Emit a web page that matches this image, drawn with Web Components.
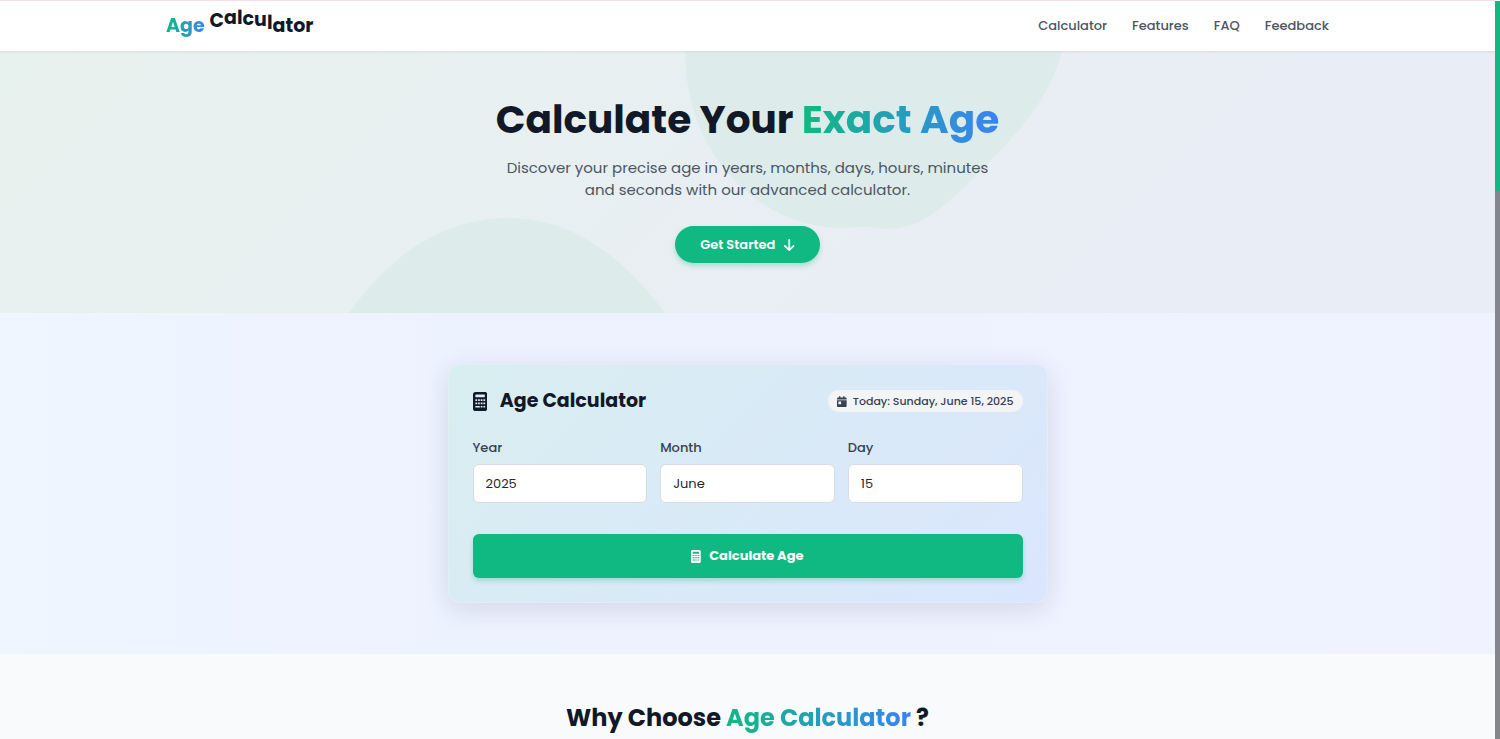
<!DOCTYPE html>
<html lang="en">
<head>
<meta charset="UTF-8">
<meta name="viewport" content="width=device-width, initial-scale=1.0">
<title>Age Calculator</title>
<style>
    :root {
        --primary: #10b981;
        --secondary: #3b82f6;
        --dark: #111827;
        --text: #4b5563;
        --label: #374151;
        --bar: 5px;
    }
    body {
        margin: 0;
        min-height: 100vh;
        display: flex;
        flex-direction: column;
        padding-right: var(--bar);
        box-sizing: border-box;
        background: #f9fafb;
        color: var(--dark);
        font-family: Poppins, Inter, "Open Sans", sans-serif;
        font-size: 13px;
    }
</style>
</head>
<body>
<site-header>
    <wave-logo slot="logo" lead="Age" word="Calculator"></wave-logo>
    <nav-link href="#calculator">Calculator</nav-link>
    <nav-link href="#features">Features</nav-link>
    <nav-link href="#faq">FAQ</nav-link>
    <nav-link href="#feedback">Feedback</nav-link>
</site-header>

<hero-banner>
    <span slot="title">Calculate Your <gradient-text>Exact Age</gradient-text></span>
    <span slot="text">Discover your precise age in years, months, days, hours, minutes and seconds with our advanced calculator.</span>
    <span slot="action">Get Started</span>
</hero-banner>

<age-calculator id="calculator" year="2025" month="6" day="15"></age-calculator>

<feature-section id="features">Why Choose <gradient-text>Age Calculator</gradient-text>?</feature-section>

<scroll-track></scroll-track>

<script>
const MONTHS = ['January', 'February', 'March', 'April', 'May', 'June', 'July',
    'August', 'September', 'October', 'November', 'December'];
const DAYS = ['Sunday', 'Monday', 'Tuesday', 'Wednesday', 'Thursday', 'Friday', 'Saturday'];

const ICONS = {
    calculator: ['0 0 384 512', 'M64 0C28.700 0 0 28.700 0 64V448c0 35.300 28.700 64 64 64H320c35.300 0 64-28.700 64-64V64c0-35.300-28.700-64-64-64H64zM80 64H304c9 0 16 7 16 16v48c0 9-7 16-16 16H80c-9 0-16-7-16-16V80c0-9 7-16 16-16zM64 192h48v48H64zM136 192h48v48h-48zM208 192h48v48h-48zM280 192h48v48h-48zM64 280h48v48H64zM136 280h48v48h-48zM208 280h48v48h-48zM280 280h48v48h-48zM64 376H184v40H64zM208 376h48v40h-48zM280 376h48v40h-48z'],
    calendar: ['0 0 448 512', 'M128 0c17.700 0 32 14.300 32 32v32h128V32c0-17.700 14.300-32 32-32s32 14.300 32 32v32h48c26.500 0 48 21.500 48 48v48H0v-48C0 85.500 21.500 64 48 64h48V32c0-17.700 14.300-32 32-32zM0 192h448v272c0 26.500-21.500 48-48 48H48c-26.500 0-48-21.500-48-48V192zm80 64c-8.800 0-16 7.200-16 16v96c0 8.800 7.200 16 16 16h96c8.800 0 16-7.200 16-16v-96c0-8.800-7.200-16-16-16H80z'],
    down: ['0 0 384 512', 'M169.400 470.600c12.500 12.500 32.800 12.500 45.300 0l160-160c12.500-12.500 12.500-32.800 0-45.300s-32.800-12.500-45.300 0L224 370.800V64c0-17.700-14.300-32-32-32s-32 14.300-32 32v306.700L54.600 265.400c-12.500-12.500-32.800-12.500-45.300 0s-12.500 32.800 0 45.300l160 160z']
};

function icon(name, height) {
    const [box, path] = ICONS[name];
    return `<svg viewBox="${box}" height="${height}" fill="currentColor" fill-rule="evenodd" aria-hidden="true"><path d="${path}"/></svg>`;
}

class GradientText extends HTMLElement {
    constructor() {
        super();
        this.attachShadow({ mode: 'open' });
        this.shadowRoot.innerHTML = `
            <style>
                :host {
                    background: linear-gradient(90deg, var(--primary), var(--secondary));
                    -webkit-background-clip: text;
                    background-clip: text;
                    color: transparent;
                }
            </style>
            <slot></slot>
        `;
    }
}

// letters ride on a wave, frozen at one frame
class WaveLogo extends HTMLElement {
    constructor() {
        super();
        this.attachShadow({ mode: 'open' });
    }

    connectedCallback() {
        const wave = [5, 8, 8, 7, 6, 3, 0, 0, 0, 0];
        const letters = [...this.getAttribute('word')]
            .map((ch, i) => `<span class="ch" style="--lift:${wave[i] || 0}px">${ch}</span>`)
            .join('');
        this.shadowRoot.innerHTML = `
            <style>
                :host {
                    display: flex;
                    gap: 5px;
                    font-size: 19px;
                    line-height: 28px;
                    font-weight: 700;
                    color: var(--dark);
                }
                .ch {
                    display: inline-block;
                    transform: translateY(calc(var(--lift) * -1));
                }
            </style>
            <gradient-text>${this.getAttribute('lead')}</gradient-text>
            <span>${letters}</span>
        `;
    }
}

class NavLink extends HTMLElement {
    constructor() {
        super();
        this.attachShadow({ mode: 'open' });
        this.shadowRoot.innerHTML = `
            <style>
                :host {
                    display: block;
                }
                a {
                    color: var(--text);
                    font-weight: 500;
                    line-height: 20px;
                    text-decoration: none;
                }
                a:hover {
                    color: var(--primary);
                }
            </style>
            <a><slot></slot></a>
        `;
    }

    connectedCallback() {
        this.shadowRoot.querySelector('a').href = this.getAttribute('href');
    }
}

class SiteHeader extends HTMLElement {
    constructor() {
        super();
        this.attachShadow({ mode: 'open' });
        this.shadowRoot.innerHTML = `
            <style>
                :host {
                    display: block;
                    background: #fff;
                    border-top: 1px solid #f8dfe5;
                    box-shadow: 0 1px 2px rgba(0, 0, 0, 0.08);
                    position: relative;
                    z-index: 1;
                }
                header {
                    max-width: 1163px;
                    margin: 0 auto;
                    padding: 11px 16px;
                    display: flex;
                    align-items: center;
                    justify-content: space-between;
                }
                nav {
                    display: flex;
                    gap: 25px;
                }
            </style>
            <header>
                <slot name="logo"></slot>
                <nav><slot></slot></nav>
            </header>
        `;
    }
}

class HeroBanner extends HTMLElement {
    constructor() {
        super();
        this.attachShadow({ mode: 'open' });
        this.shadowRoot.innerHTML = `
            <style>
                :host {
                    display: block;
                    position: relative;
                    overflow: hidden;
                    background: linear-gradient(135deg, #e7f1ed, #e8eff2 45%, #e9edf5 75%, #e9edf5);
                }
                .blobs {
                    position: absolute;
                    inset: 0;
                    width: 100%;
                    height: 100%;
                    fill: #ddecea;
                }
                .content {
                    position: relative;
                    display: flex;
                    flex-direction: column;
                    align-items: center;
                    padding: 50px 16px;
                    text-align: center;
                }
                h1 {
                    margin: 0 0 18px;
                    font-size: 39px;
                    line-height: 38px;
                    font-weight: 700;
                }
                p {
                    margin: 0 0 25px;
                    max-width: 500px;
                    font-size: 15px;
                    line-height: 22px;
                    color: var(--text);
                }
                button {
                    display: flex;
                    align-items: center;
                    gap: 9px;
                    border: 0;
                    border-radius: 20px;
                    padding: 0 25px;
                    height: 37px;
                    background: var(--primary);
                    color: #fff;
                    font: inherit;
                    font-weight: 600;
                    box-shadow: 0 3px 5px rgba(16, 185, 129, 0.3);
                    cursor: pointer;
                }
            </style>
            <svg class="blobs" viewBox="0 0 1495 262" preserveAspectRatio="xMidYMin slice" aria-hidden="true">
                <path d="M685 0C686 50 700 95 737 132C765 160 802 177 845 177C854 177 861 175 868 176C896 181 918 176 942 156C962 141 976 124 994 106C1027 73 1052 40 1062 0Z"/>
                <path d="M349 262C384 212 436 167 509 167C576 167 626 210 665 262Z"/>
            </svg>
            <div class="content">
                <h1><slot name="title"></slot></h1>
                <p><slot name="text"></slot></p>
                <button type="button"><slot name="action"></slot>${icon('down', 14)}</button>
            </div>
        `;
    }
}

class DateField extends HTMLElement {
    static formAssociated = true;

    constructor() {
        super();
        this._internals = this.attachInternals();
        this.attachShadow({ mode: 'open' });
        this.shadowRoot.innerHTML = `
            <style>
                :host {
                    display: flex;
                    flex-direction: column;
                    gap: 6px;
                }
                label {
                    line-height: 20px;
                    font-weight: 500;
                    color: var(--label);
                }
                select {
                    appearance: none;
                    box-sizing: border-box;
                    width: 100%;
                    height: 39px;
                    padding: 0 12px;
                    border: 1px solid #d9dce2;
                    border-radius: 6px;
                    background: #fff;
                    color: #1f2937;
                    font: inherit;
                }
            </style>
            <label for="field"></label>
            <select id="field"></select>
        `;
        this.select = this.shadowRoot.querySelector('select');
        this.select.addEventListener('change', () => this._sync());
    }

    connectedCallback() {
        this.shadowRoot.querySelector('label').textContent = this.getAttribute('label');
    }

    fill(items, value) {
        this.select.replaceChildren(...items.map(([val, text]) => new Option(text, val)));
        this.select.value = value;
        this._sync();
    }

    get value() {
        return Number(this.select.value);
    }

    _sync() {
        this._internals.setFormValue(this.select.value);
    }
}

class AgeCalculator extends HTMLElement {
    constructor() {
        super();
        this.attachShadow({ mode: 'open' });
        this.shadowRoot.innerHTML = `
            <style>
                :host {
                    display: block;
                    padding: 51px 16px;
                    background: linear-gradient(90deg, #eff6ff, #edf2ff 30%, #eef2ff 60%, #f0f2ff);
                }
                .card {
                    box-sizing: border-box;
                    max-width: 600px;
                    margin: 0 auto;
                    padding: 24px;
                    border: 1px solid rgba(255, 255, 255, 0.2);
                    border-radius: 13px;
                    background: linear-gradient(135deg, #d8eef0, #d9eaf6 45%, #dbe6fe) border-box;
                    box-shadow: 0 6px 26px rgba(31, 38, 80, 0.13);
                }
                .head {
                    display: flex;
                    align-items: center;
                    justify-content: space-between;
                    margin-bottom: 25px;
                }
                h2 {
                    display: flex;
                    align-items: center;
                    gap: 13px;
                    margin: 0;
                    font-size: 19px;
                    line-height: 24px;
                    font-weight: 700;
                }
                .today {
                    display: flex;
                    align-items: center;
                    gap: 6px;
                    padding: 0 9px;
                    border-radius: 11px;
                    background: #f3f4f6;
                    color: var(--label);
                    font-size: 11px;
                    line-height: 22px;
                    font-weight: 500;
                }
                .fields {
                    display: grid;
                    grid-template-columns: repeat(3, 1fr);
                    gap: 13px;
                    margin-bottom: 31px;
                }
                button {
                    display: flex;
                    align-items: center;
                    justify-content: center;
                    gap: 8px;
                    width: 100%;
                    height: 44px;
                    border: 0;
                    border-radius: 6px;
                    background: var(--primary);
                    color: #fff;
                    font: inherit;
                    font-weight: 700;
                    box-shadow: 0 3px 5px rgba(16, 185, 129, 0.3);
                    cursor: pointer;
                }
                output:empty {
                    display: none;
                }
                output {
                    display: block;
                    margin-top: 16px;
                    text-align: center;
                }
            </style>
            <form class="card">
                <div class="head">
                    <h2>${icon('calculator', 19)}<span>Age Calculator</span></h2>
                    <div class="today">${icon('calendar', 11)}<span class="date"></span></div>
                </div>
                <div class="fields">
                    <date-field name="year" label="Year"></date-field>
                    <date-field name="month" label="Month"></date-field>
                    <date-field name="day" label="Day"></date-field>
                </div>
                <button type="submit">${icon('calculator', 13)}<span>Calculate Age</span></button>
                <output></output>
            </form>
        `;
        this.shadowRoot.querySelector('form').addEventListener('submit', e => {
            e.preventDefault();
            this.calculate();
        });
    }

    connectedCallback() {
        const [y, m, d] = ['year', 'month', 'day'].map(a => Number(this.getAttribute(a)));
        this._today = new Date(y, m - 1, d);
        this.shadowRoot.querySelector('.date').textContent =
            `Today: ${DAYS[this._today.getDay()]}, ${MONTHS[m - 1]} ${d}, ${y}`;

        this._fields = [...this.shadowRoot.querySelectorAll('date-field')];
        this._fields[0].fill(Array.from({ length: 120 }, (_, i) => [y - i, y - i]), y);
        this._fields[1].fill(MONTHS.map((name, i) => [i + 1, name]), m);
        this._fields[2].fill(Array.from({ length: 31 }, (_, i) => [i + 1, i + 1]), d);
    }

    calculate() {
        const [y, m, d] = this._fields.map(f => f.value);
        const now = this._today;
        let years = now.getFullYear() - y;
        let months = now.getMonth() + 1 - m;
        let days = now.getDate() - d;
        if (days < 0) {
            months--;
            days += new Date(now.getFullYear(), now.getMonth(), 0).getDate();
        }
        if (months < 0) {
            years--;
            months += 12;
        }
        this.shadowRoot.querySelector('output').textContent =
            `${years} years, ${months} months, ${days} days`;
    }
}

class FeatureSection extends HTMLElement {
    constructor() {
        super();
        this.attachShadow({ mode: 'open' });
        this.shadowRoot.innerHTML = `
            <style>
                :host {
                    display: block;
                    flex: 1;
                    padding: 50px 16px 0;
                    background: #f9fafb;
                }
                h2 {
                    margin: 0;
                    font-size: 24px;
                    line-height: 28px;
                    font-weight: 700;
                    text-align: center;
                }
            </style>
            <h2><slot></slot></h2>
        `;
    }
}

class ScrollTrack extends HTMLElement {
    constructor() {
        super();
        this.attachShadow({ mode: 'open' });
        this.shadowRoot.innerHTML = `
            <style>
                :host {
                    position: fixed;
                    inset: 1px 0 0 auto;
                    width: var(--bar);
                    background: #85858f;
                    z-index: 2;
                }
                div {
                    height: 190px;
                    border-radius: 0 0 2px 2px;
                    background: var(--primary);
                }
            </style>
            <div></div>
        `;
    }
}

customElements.define('gradient-text', GradientText);
customElements.define('wave-logo', WaveLogo);
customElements.define('nav-link', NavLink);
customElements.define('site-header', SiteHeader);
customElements.define('hero-banner', HeroBanner);
customElements.define('date-field', DateField);
customElements.define('age-calculator', AgeCalculator);
customElements.define('feature-section', FeatureSection);
customElements.define('scroll-track', ScrollTrack);
</script>
</body>
</html>
